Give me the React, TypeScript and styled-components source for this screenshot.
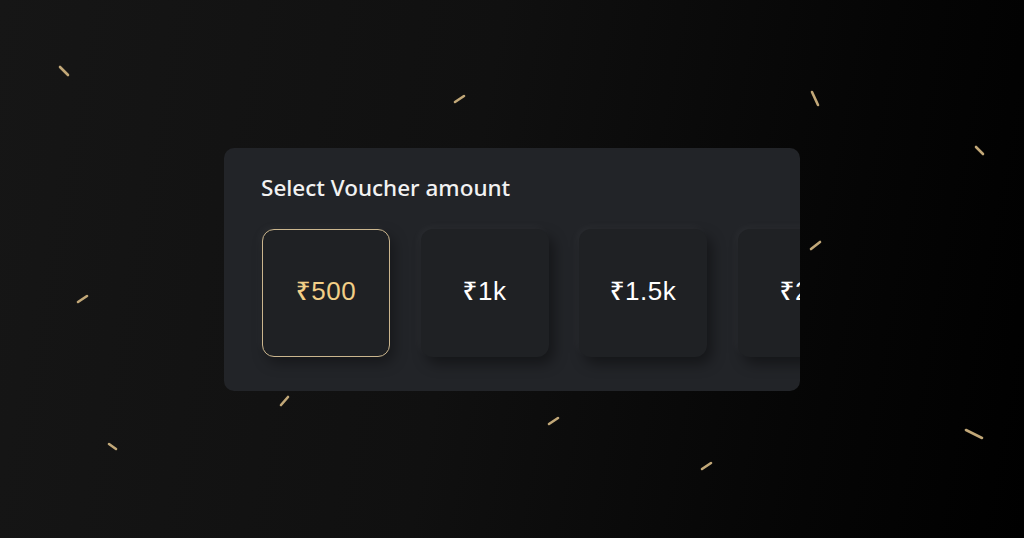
import React from 'react';
import styled, { createGlobalStyle } from 'styled-components';

const GlobalStyle = createGlobalStyle`
  html, body, #root {
    margin: 0;
    padding: 0;
    width: 100%;
    height: 100%;
  }
  body {
    background: #0b0b0b;
    font-family: "Noto Sans", "DejaVu Sans", sans-serif;
    overflow: hidden;
  }
`;

const Page = styled.div`
  position: relative;
  width: 1024px;
  height: 538px;
  display: flex;
  align-items: center;
  justify-content: center;
  background: linear-gradient(100deg, #161616 0%, #101010 45%, #050505 80%, #000 100%);
  overflow: hidden;
`;

const Confetti = styled.svg`
  position: absolute;
  inset: 0;
  pointer-events: none;
`;

const Card = styled.section`
  position: relative;
  width: 576px;
  height: 243px;
  box-sizing: border-box;
  padding: 26px 0 0 37px;
  background: #222428;
  border-radius: 10px;
  overflow: hidden;
  display: flex;
  flex-direction: column;
  gap: 28px;
`;

const Title = styled.h2`
  margin: 0;
  font-family: "Noto Sans", sans-serif;
  font-weight: 500;
  font-size: 22.5px;
  line-height: 27px;
  color: #f2f2f2;
`;

const Amounts = styled.div`
  display: flex;
  gap: 30.5px;
  padding-left: 1px;
`;

const Amount = styled.button<{ $active?: boolean }>`
  flex: 0 0 128px;
  height: 128px;
  box-sizing: border-box;
  display: flex;
  align-items: center;
  justify-content: center;
  border-radius: 12px;
  border: 1px solid ${({ $active }) => ($active ? '#cbb68e' : 'transparent')};
  background: #1f2124;
  box-shadow: ${({ $active }) =>
    $active
      ? '4px 6px 14px rgba(0, 0, 0, 0.35), -3px -3px 8px rgba(255, 255, 255, 0.03)'
      : '5px 7px 14px rgba(0, 0, 0, 0.4), -3px -3px 8px rgba(255, 255, 255, 0.035)'};
  color: ${({ $active }) => ($active ? '#f2cf87' : '#ffffff')};
  font-family: "Liberation Sans", "Noto Sans", sans-serif;
  font-size: 26px;
  font-weight: 500;
  letter-spacing: 0.5px;
  padding: 0 0 5px;
  cursor: pointer;
`;

const sticks = [
  { x1: 60, y1: 67, x2: 68, y2: 75 },
  { x1: 455, y1: 102, x2: 464, y2: 96 },
  { x1: 812, y1: 92, x2: 818, y2: 105 },
  { x1: 976, y1: 147, x2: 983, y2: 154 },
  { x1: 811, y1: 249, x2: 820, y2: 242 },
  { x1: 78, y1: 302, x2: 87, y2: 296 },
  { x1: 281, y1: 405, x2: 288, y2: 397 },
  { x1: 109, y1: 444, x2: 116, y2: 449 },
  { x1: 549, y1: 424, x2: 558, y2: 418 },
  { x1: 702, y1: 469, x2: 711, y2: 463 },
  { x1: 966, y1: 430, x2: 982, y2: 438 },
];

const amounts = ['₹500', '₹1k', '₹1.5k', '₹2k'];

const App: React.FC = () => {
  return (
    <>
      <GlobalStyle />
      <Page>
        <Confetti width="1024" height="538" viewBox="0 0 1024 538">
          {sticks.map((s, i) => (
            <line
              key={i}
              x1={s.x1}
              y1={s.y1}
              x2={s.x2}
              y2={s.y2}
              stroke="#c2a878"
              strokeWidth="2.6"
              strokeLinecap="round"
            />
          ))}
        </Confetti>
        <Card>
          <Title>Select Voucher amount</Title>
          <Amounts>
            {amounts.map((a, i) => (
              <Amount key={a} $active={i === 0}>
                {a}
              </Amount>
            ))}
          </Amounts>
        </Card>
      </Page>
    </>
  );
};

export default App;
